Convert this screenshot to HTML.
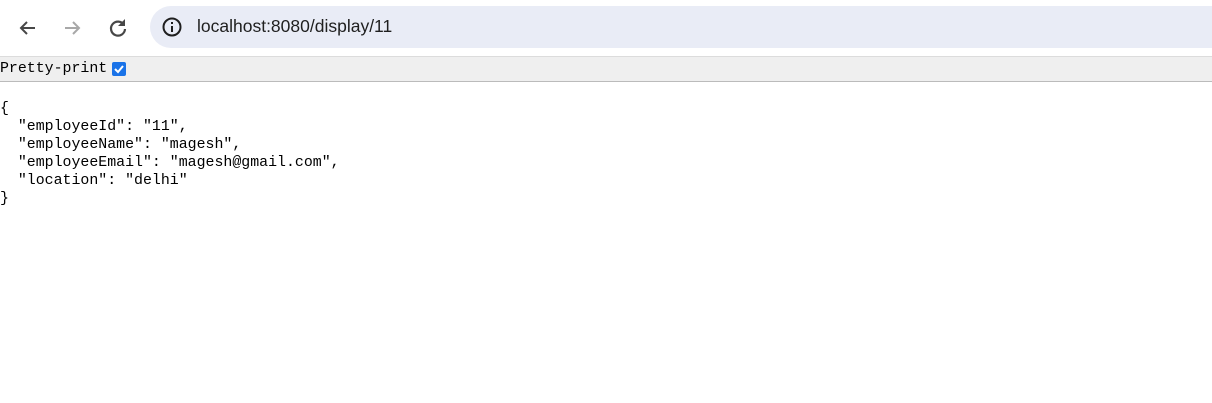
<!DOCTYPE html>
<html><head><style>
body{margin:0;width:1212px;height:403px;background:#fff;overflow:hidden;position:relative;font-family:"Liberation Mono",monospace;}
.top{position:absolute;left:0;top:0;width:1212px;height:56px;background:#fff;}
.addr{position:absolute;left:150px;top:6px;width:1100px;height:42px;border-radius:21px;background:#e9ecf6;}
.url{position:absolute;left:197px;top:16px;font:17.5px "Liberation Sans",sans-serif;color:#1f1f1f;}
.pp{position:absolute;left:0;top:56px;width:1212px;height:24px;background:#efefef;border-top:1px solid #dcdcdc;border-bottom:1px solid #bbb;}
.pp span{position:absolute;left:0;top:4px;font-size:14.9px;color:#000;}
.cb{position:absolute;left:112px;top:5px;width:14px;height:14px;background:#1a73e8;border-radius:2px;}
pre{position:absolute;left:0;top:100px;margin:0;font-size:14.9px;line-height:18px;color:#000;}
</style></head><body>
<div class="top">
<svg style="position:absolute;left:16px;top:16px" width="24" height="24" viewBox="0 0 24 24"><path d="M19 12H6M11 6l-6 6 6 6" fill="none" stroke="#474747" stroke-width="2"/></svg>
<svg style="position:absolute;left:60px;top:16px" width="24" height="24" viewBox="0 0 24 24"><path d="M5 12h13M13 6l6 6-6 6" fill="none" stroke="#a8a8a8" stroke-width="2"/></svg>
<svg style="position:absolute;left:106px;top:15px" width="24" height="24" viewBox="0 0 24 24"><path d="M18 10A7 7 0 1 0 19 14" fill="none" stroke="#474747" stroke-width="2.2"/><path d="M19 4v7h-7z" fill="#474747"/></svg>
<div class="addr"></div>
<svg style="position:absolute;left:161px;top:16px" width="22" height="22" viewBox="0 0 22 22"><circle cx="11" cy="11" r="8.5" fill="none" stroke="#1f1f1f" stroke-width="2"/><rect x="10" y="10" width="2" height="6" fill="#1f1f1f"/><rect x="10" y="6" width="2" height="2" fill="#1f1f1f"/></svg>
<div class="url">localhost:8080/display/11</div>
</div>
<div class="pp"><span>Pretty-print</span><div class="cb"><svg width="14" height="14" viewBox="0 0 14 14"><path d="M3 7l3 3 5-6" fill="none" stroke="#fff" stroke-width="2"/></svg></div></div>
<pre>{
  "employeeId": "11",
  "employeeName": "magesh",
  "employeeEmail": "magesh@gmail.com",
  "location": "delhi"
}</pre>
</body></html>
